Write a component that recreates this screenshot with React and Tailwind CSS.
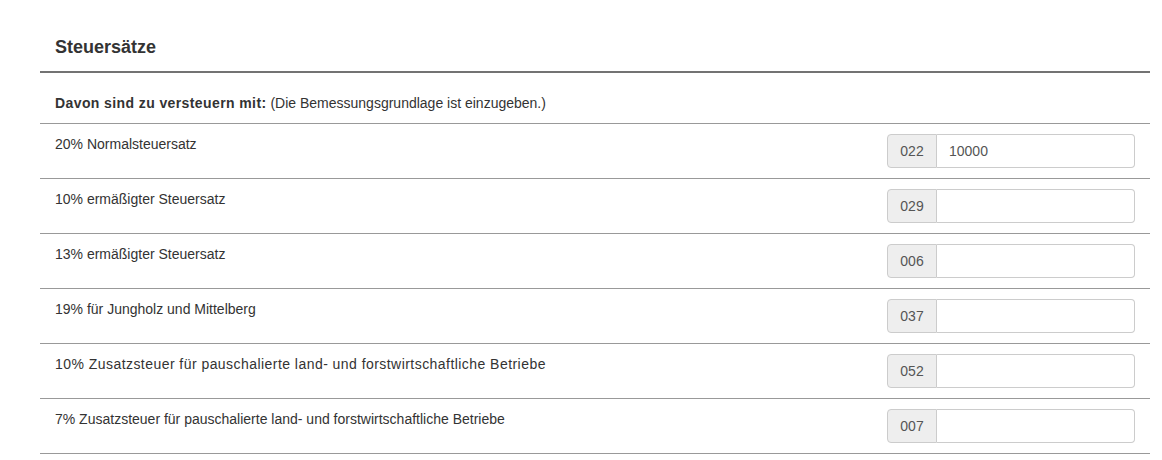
import { useState } from "react";

const ROWS = [
  { label: "20% Normalsteuersatz", code: "022", value: "10000" },
  { label: "10% ermäßigter Steuersatz", code: "029", value: "" },
  { label: "13% ermäßigter Steuersatz", code: "006", value: "" },
  { label: "19% für Jungholz und Mittelberg", code: "037", value: "" },
  { label: "10% Zusatzsteuer für pauschalierte land- und forstwirtschaftliche Betriebe", code: "052", value: "", wide: true },
  { label: "7% Zusatzsteuer für pauschalierte land- und forstwirtschaftliche Betriebe", code: "007", value: "" },
];

export default function App() {
  const [values, setValues] = useState(ROWS.map(r => r.value));

  return (
    <div className="min-h-screen bg-white pl-[40px] text-[#333] font-['Liberation_Sans',Arial,sans-serif]">
      <div className="w-[1110px]">
        {/* Heading */}
        <div className="h-[73px] border-b-2 border-[#737373] px-[15px] pt-[36px]">
          <h3 className="text-[18px] leading-[22px] font-bold">Steuersätze</h3>
        </div>

        <div className="h-[51px] border-b border-[#999] px-[15px] pt-[21px] text-[14px] leading-[18px]">
          <strong className="tracking-[0.4px]">Davon sind zu versteuern mit:</strong> (Die Bemessungsgrundlage ist einzugeben.)
        </div>

        {ROWS.map((r, i) => (
          <div key={r.code} className="h-[55px] border-b border-[#999] px-[15px] py-[10px] flex justify-between items-start">
            <label className={r.wide ? "text-[14px] leading-[20px] tracking-[0.45px]" : "text-[14px] leading-[20px]"}>{r.label}</label>
            <div className="flex w-[248px] h-[34px]">
              <span className="w-[50px] flex items-center justify-center bg-[#eee] border border-[#ccc] rounded-l-[4px] text-[14px] text-[#555]">
                {r.code}
              </span>
              <input
                value={values[i]}
                onChange={e => setValues(v => v.map((x, j) => (j === i ? e.target.value : x)))}
                className="flex-1 min-w-0 h-[34px] border border-l-0 border-[#ccc] rounded-r-[4px] px-[12px] text-[14px] text-[#555] outline-none"
              />
            </div>
          </div>
        ))}
      </div>
    </div>
  );
}
